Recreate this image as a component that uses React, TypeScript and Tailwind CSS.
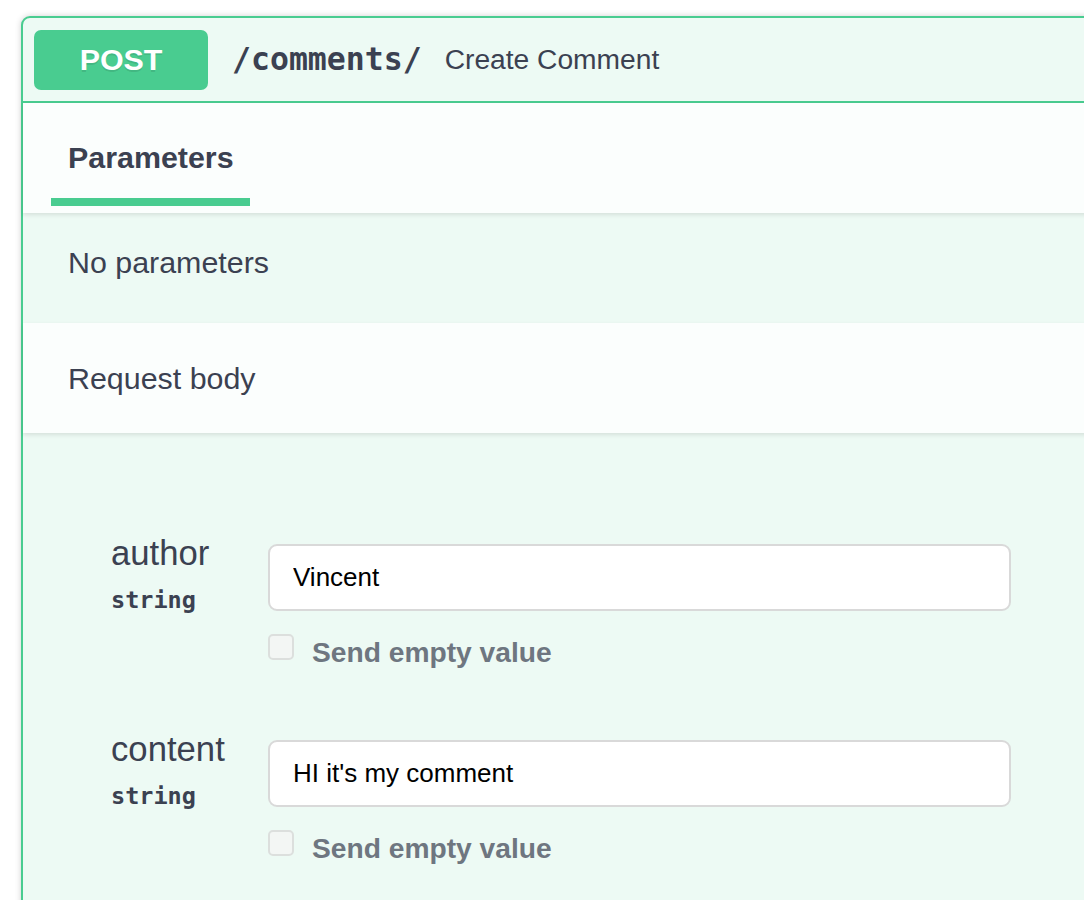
const sans = "font-['Liberation_Sans',Arial,sans-serif]";
const mono = "font-['DejaVu_Sans_Mono','Liberation_Mono',monospace]";

interface Field {
  name: string;
  type: string;
  value: string;
}

const fields: Field[] = [
  { name: 'author', type: 'string', value: 'Vincent' },
  { name: 'content', type: 'string', value: "HI it's my comment" },
];

function FieldRow({ field, first }: { field: Field; first: boolean }) {
  return (
    <div className={`flex items-start ${first ? '' : 'mt-[61px]'}`}>
      <div className="w-[157px] shrink-0 flex flex-col">
        <span className="text-[34.7px] leading-[40px] text-[#3b4151]">{field.name}</span>
        <span className={`${mono} mt-[13px] text-[23.5px] leading-[28px] font-bold text-[#3b4151]`}>
          {field.type}
        </span>
      </div>
      <div className="mt-[11px] flex flex-col">
        <input
          readOnly
          value={field.value}
          className={`${sans} w-[743px] h-[67px] border-2 border-[#d9d9d9] rounded-[9px] bg-white pl-[23px] text-[26px] text-black outline-none`}
        />
        <div className="mt-[23px] flex items-start">
          <span className="w-[26px] h-[26px] shrink-0 border-2 border-[#dcdfdd] rounded-[5px] bg-[#f3f6f4]" />
          <span className="ml-[18px] mt-[2px] text-[28.2px] leading-[32px] font-bold text-[#6e7680]">
            Send empty value
          </span>
        </div>
      </div>
    </div>
  );
}

export default function App() {
  return (
    <div className={`${sans} w-[1084px] h-[900px] overflow-hidden bg-white`}>
      <div className="ml-[21px] mt-[16px] w-[1120px] h-[1000px] border-2 border-[#49cc90] rounded-tl-[9px] bg-[#edfaf4] shadow-[0_0_6px_rgba(0,0,0,0.19)]">
        {/* summary */}
        <div className="h-[85px] flex items-center border-b-2 border-[#49cc90]">
          <div className="ml-[11px] w-[174px] h-[60px] rounded-[7px] bg-[#49cc90] flex items-center justify-center text-white font-bold text-[30.4px] [text-shadow:0_2px_0_rgba(0,0,0,0.1)]">
            POST
          </div>
          <span className={`${mono} ml-[24px] text-[31.5px] font-bold text-[#3b4151]`}>/comments/</span>
          <span className="ml-[23px] text-[28.2px] text-[#3b4151]">Create Comment</span>
        </div>

        {/* tab header */}
        <div className="relative z-10 h-[110px] bg-[#fbfefd] shadow-[0_2px_4px_rgba(0,0,0,0.1)]">
          <div className="ml-[28px] w-[199px] h-full flex flex-col">
            <span className="pl-[17px] pt-[36px] text-[30.4px] leading-[36px] font-bold text-[#3b4151]">
              Parameters
            </span>
            <span className="mt-auto mb-[7px] h-[8px] bg-[#49cc90]" />
          </div>
        </div>

        <div className="h-[110px] pl-[45px] pt-[31px]">
          <p className="text-[30.4px] leading-[36px] text-[#3b4151]">No parameters</p>
        </div>

        <div className="relative z-10 h-[110px] flex items-center pl-[45px] bg-[#fbfefd] shadow-[0_2px_4px_rgba(0,0,0,0.1)]">
          <span className="text-[30.4px] leading-[36px] text-[#3b4151]">Request body</span>
        </div>

        <div className="pl-[88px] pt-[100px]">
          {fields.map((f, i) => (
            <FieldRow key={f.name} field={f} first={i === 0} />
          ))}
        </div>
      </div>
    </div>
  );
}
